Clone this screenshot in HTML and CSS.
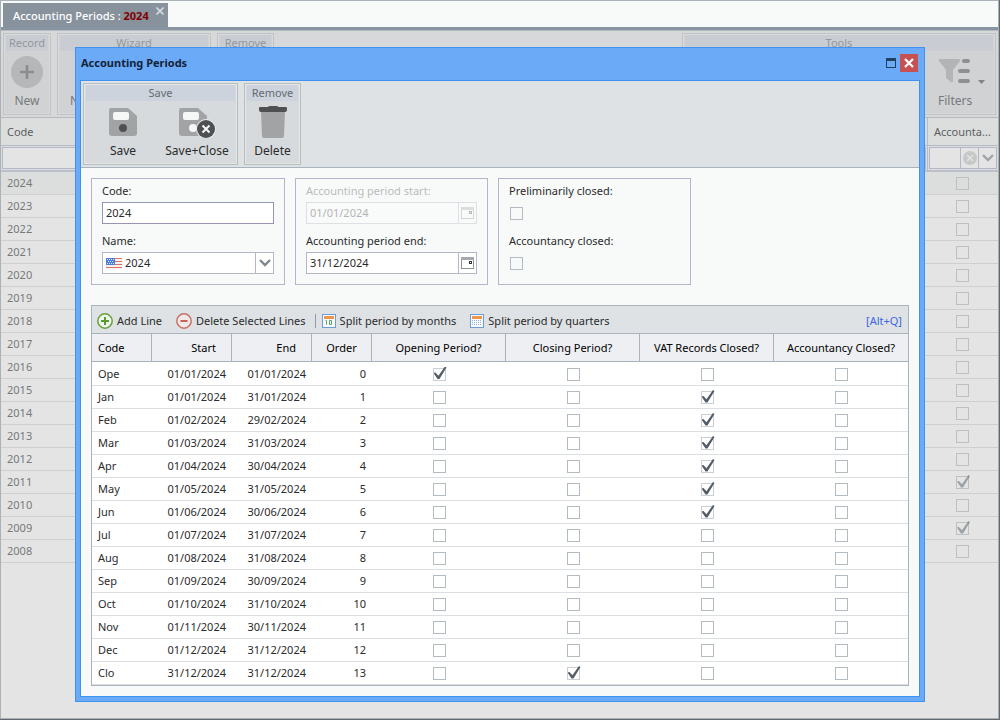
FILE: index.html
```
<!DOCTYPE html>
<html lang="en">
<head>
<meta charset="utf-8">
<title>Accounting Periods</title>
<link rel="stylesheet" href="styles.css">
</head>
<body>
<div class="app">
  <nav class="tabs">
    <div class="tab"><span>Accounting Periods : <b>2024</b></span><button class="tab-close" aria-label="Close tab"><svg width="8" height="8" viewBox="0 0 8 8"><path d="M0.5 0.5L7.5 7.5M7.5 0.5L0.5 7.5" stroke="#d5dadf" stroke-width="1.6"/></svg></button></div>
  </nav>
  <div class="ribbon ribbon-back">
    <section class="group group-record"><h2>Record</h2><div class="tools"><button class="tool"><svg width="32" height="32" viewBox="0 0 32 32"><circle cx="16" cy="16" r="16" fill="#b5b7b8"/><path d="M16 9v14M9 16h14" stroke="#8a8c8d" stroke-width="2.6"/></svg><span>New</span></button></div></section>
    <section class="group group-wizard"><h2>Wizard</h2><div class="tools"><button class="tool"><span>New Period</span></button></div></section>
    <section class="group group-remove"><h2>Remove</h2></section>
    <section class="group group-tools"><h2>Tools</h2><div class="tools tools-end"><button class="tool tool-filter"><svg width="48" height="32" viewBox="0 0 48 32"><path d="M1 5Q0 3 2 3H21Q23 3 22 5L15 14V25Q15 27 13 26L8 22V14Z" fill="#b2b4b5"/><path d="M26 5H30M22 15H30M22 25H30" stroke="#8e9091" stroke-width="4" stroke-linecap="round"/><path d="M40 24h7l-3.500 4z" fill="#7f8385"/></svg><span>Filters</span></button></div></section>
  </div>
  <table class="periods">
    <colgroup><col><col class="col-acc"></colgroup>
    <thead>
      <tr><th>Code</th><th>Accounta...</th></tr>
      <tr class="filter"><td><input type="text" aria-label="Filter code"></td><td><div class="filter-box"><input type="text" aria-label="Filter accountancy"><button aria-label="Clear"><svg width="14" height="14" viewBox="0 0 14 14"><circle cx="7" cy="7" r="7" fill="#c6c7c8"/><path d="M4 4l6 6M10 4l-6 6" stroke="#e4e4e4" stroke-width="1.4"/></svg></button><button aria-label="Open list"><svg width="12" height="8" viewBox="0 0 12 8"><path d="M1 1L6 6L11 1" fill="none" stroke="#a0a4a8" stroke-width="2.400"/></svg></button></div></td></tr>
    </thead>
    <tbody>
      <tr class="selected"><td>2024</td><td><input type="checkbox" aria-label="2024 closed"></td></tr>
      <tr><td>2023</td><td><input type="checkbox" aria-label="2023 closed"></td></tr>
      <tr><td>2022</td><td><input type="checkbox" aria-label="2022 closed"></td></tr>
      <tr><td>2021</td><td><input type="checkbox" aria-label="2021 closed"></td></tr>
      <tr><td>2020</td><td><input type="checkbox" aria-label="2020 closed"></td></tr>
      <tr><td>2019</td><td><input type="checkbox" aria-label="2019 closed"></td></tr>
      <tr><td>2018</td><td><input type="checkbox" aria-label="2018 closed"></td></tr>
      <tr><td>2017</td><td><input type="checkbox" aria-label="2017 closed"></td></tr>
      <tr><td>2016</td><td><input type="checkbox" aria-label="2016 closed"></td></tr>
      <tr><td>2015</td><td><input type="checkbox" aria-label="2015 closed"></td></tr>
      <tr><td>2014</td><td><input type="checkbox" aria-label="2014 closed"></td></tr>
      <tr><td>2013</td><td><input type="checkbox" aria-label="2013 closed"></td></tr>
      <tr><td>2012</td><td><input type="checkbox" aria-label="2012 closed"></td></tr>
      <tr><td>2011</td><td><input type="checkbox" aria-label="2011 closed" checked></td></tr>
      <tr><td>2010</td><td><input type="checkbox" aria-label="2010 closed"></td></tr>
      <tr><td>2009</td><td><input type="checkbox" aria-label="2009 closed" checked></td></tr>
      <tr><td>2008</td><td><input type="checkbox" aria-label="2008 closed"></td></tr>
    </tbody>
  </table>
</div>

<div class="dialog" role="dialog" aria-labelledby="dlg-title">
  <header class="titlebar">
    <h1 id="dlg-title">Accounting Periods</h1>
    <button class="max" aria-label="Maximize"></button>
    <button class="close" aria-label="Close"><svg width="10" height="10" viewBox="0 0 10 10"><path d="M1 1l8 8M9 1L1 9" stroke="#fff" stroke-width="2.200"/></svg></button>
  </header>
  <div class="content">
    <div class="ribbon">
      <section class="group group-save"><h2>Save</h2><div class="tools">
        <button class="tool"><svg width="32" height="32" viewBox="0 0 32 32"><path d="M4 2H21L30 10V27Q30 30 27 30H5Q2 30 2 27V5Q2 2 4 2Z" fill="#a2a3a5"/><rect x="6" y="6" width="16" height="8" rx="2" fill="#f5f7f7"/><circle cx="16" cy="22" r="4" fill="#4f5051"/></svg><span>Save</span></button>
        <button class="tool"><svg width="42" height="32" viewBox="0 0 42 32"><path d="M5 2H22L31 10V27Q31 30 28 30H6Q3 30 3 27V5Q3 2 5 2Z" fill="#a2a3a5"/><rect x="7" y="6" width="16" height="8" rx="2" fill="#f5f7f7"/><circle cx="17" cy="22" r="4" fill="#f5f7f7"/><circle cx="30" cy="23" r="10" fill="#e6eaec"/><circle cx="30" cy="23" r="9" fill="#4f5051"/><path d="M26.500 19.500l7 7M33.500 19.500l-7 7" stroke="#f5f7f7" stroke-width="2"/></svg><span>Save+Close</span></button>
      </div></section>
      <section class="group group-remove"><h2>Remove</h2><div class="tools"><button class="tool"><svg width="32" height="32" viewBox="0 0 32 32"><path d="M4 5H28L27 30Q27 32 25 32H7Q5 32 5 30Z" fill="#a2a3a5"/><path d="M3 1H11Q11 0 13 0H20Q21 0 21 1H29Q30 1 30 2V4Q30 6 28 6H4Q2 6 2 4V2Q2 1 3 1Z" fill="#4f5051"/></svg><span>Delete</span></button></div></section>
    </div>

    <form class="form">
      <fieldset>
        <label for="code">Code:</label>
        <div class="field field-focus"><input id="code" type="text" value="2024"></div>
        <label for="name">Name:</label>
        <div class="field"><svg class="flag" width="16" height="11" viewBox="0 0 16 11"><rect width="16" height="11" fill="#f4f2f2"/><path d="M0 .5H16M0 3.500H16M0 6.500H16M0 9.500H16" stroke="#e0705f" stroke-width="1.200"/><rect width="9" height="7" fill="#4a7fd6"/><path d="M1 1.500H8M2 3.500H8M1 5.500H8" stroke="#dbe6f8" stroke-dasharray="1 1"/></svg><input id="name" type="text" value="2024"><button type="button" aria-label="Open list"><svg width="12" height="8" viewBox="0 0 12 8"><path d="M1 1L6 6L11 1" fill="none" stroke="#7c8791" stroke-width="2.400"/></svg></button></div>
      </fieldset>
      <fieldset>
        <label class="dim" for="start">Accounting period start:</label>
        <div class="field field-off"><input id="start" type="text" value="01/01/2024" disabled><button type="button" aria-label="Pick start date" disabled><svg width="13" height="12" viewBox="0 0 13 12"><rect x=".5" y=".5" width="12" height="11" fill="none" stroke="#8d9297"/><rect width="13" height="3" fill="#a5a9ad"/><rect x="8.500" y="4.500" width="2" height="2" fill="#fff" stroke="#33373b"/></svg></button></div>
        <label for="end">Accounting period end:</label>
        <div class="field"><input id="end" type="text" value="31/12/2024"><button type="button" aria-label="Pick end date"><svg width="13" height="12" viewBox="0 0 13 12"><rect x=".5" y=".5" width="12" height="11" fill="none" stroke="#8d9297"/><rect width="13" height="3" fill="#a5a9ad"/><rect x="8.500" y="4.500" width="2" height="2" fill="#fff" stroke="#33373b"/></svg></button></div>
      </fieldset>
      <fieldset>
        <label for="prelim">Preliminarily closed:</label>
        <div class="check-row"><input id="prelim" type="checkbox"></div>
        <label for="acc">Accountancy closed:</label>
        <div class="check-row"><input id="acc" type="checkbox"></div>
      </fieldset>
    </form>

    <section class="lines">
      <div class="linebar">
        <button><svg width="16" height="16" viewBox="0 0 16 16"><circle cx="8" cy="8" r="7.200" fill="#f0f4ee" stroke="#66a03a" stroke-width="1.500"/><path d="M8 4v8M4 8h8" stroke="#5c9a2f" stroke-width="2"/></svg>Add Line</button>
        <button class="remove-line"><svg width="16" height="16" viewBox="0 0 16 16"><circle cx="8" cy="8" r="7.200" fill="#efe9e9" stroke="#cb6f66" stroke-width="1.500"/><path d="M4.500 8h7" stroke="#c96158" stroke-width="2"/></svg>Delete Selected Lines</button>
        <i class="sep"></i>
        <button><svg width="14" height="14" viewBox="0 0 14 14"><rect x=".5" y=".5" width="13" height="13" fill="#f8fbff" stroke="#6e9cd8"/><rect x="2" y="2" width="10" height="3" fill="#f2944a"/><path d="M4.500 6.500v4M3.500 6.500h1M7.500 6.500h2v4h-2z" fill="none" stroke="#5aa567"/></svg>Split period by months</button>
        <button class="quarters"><svg width="14" height="14" viewBox="0 0 14 14"><rect x=".5" y=".5" width="13" height="13" fill="#f8fbff" stroke="#6e9cd8"/><rect x="2" y="2" width="10" height="3" fill="#f2944a"/><path d="M2 6.500h10M2 8.500h10M2 10.500h10" stroke="#96b2dd" stroke-dasharray="1 1"/></svg>Split period by quarters</button>
        <a href="#lines">[Alt+Q]</a>
      </div>
      <table id="lines">
        <colgroup><col class="c60"><col class="c80"><col class="c80"><col class="c60"><col><col><col><col></colgroup>
        <thead><tr><th>Code</th><th class="num">Start</th><th class="num">End</th><th class="mid">Order</th><th class="mid">Opening Period?</th><th class="mid">Closing Period?</th><th class="mid">VAT Records Closed?</th><th class="mid">Accountancy Closed?</th></tr></thead>
        <tbody>
          <tr><td>Ope</td><td>01/01/2024</td><td>01/01/2024</td><td>0</td><td><input type="checkbox" aria-label="Opening" checked></td><td><input type="checkbox" aria-label="Closing"></td><td><input type="checkbox" aria-label="VAT"></td><td><input type="checkbox" aria-label="Accountancy"></td></tr>
          <tr><td>Jan</td><td>01/01/2024</td><td>31/01/2024</td><td>1</td><td><input type="checkbox" aria-label="Opening"></td><td><input type="checkbox" aria-label="Closing"></td><td><input type="checkbox" aria-label="VAT" checked></td><td><input type="checkbox" aria-label="Accountancy"></td></tr>
          <tr><td>Feb</td><td>01/02/2024</td><td>29/02/2024</td><td>2</td><td><input type="checkbox" aria-label="Opening"></td><td><input type="checkbox" aria-label="Closing"></td><td><input type="checkbox" aria-label="VAT" checked></td><td><input type="checkbox" aria-label="Accountancy"></td></tr>
          <tr><td>Mar</td><td>01/03/2024</td><td>31/03/2024</td><td>3</td><td><input type="checkbox" aria-label="Opening"></td><td><input type="checkbox" aria-label="Closing"></td><td><input type="checkbox" aria-label="VAT" checked></td><td><input type="checkbox" aria-label="Accountancy"></td></tr>
          <tr><td>Apr</td><td>01/04/2024</td><td>30/04/2024</td><td>4</td><td><input type="checkbox" aria-label="Opening"></td><td><input type="checkbox" aria-label="Closing"></td><td><input type="checkbox" aria-label="VAT" checked></td><td><input type="checkbox" aria-label="Accountancy"></td></tr>
          <tr><td>May</td><td>01/05/2024</td><td>31/05/2024</td><td>5</td><td><input type="checkbox" aria-label="Opening"></td><td><input type="checkbox" aria-label="Closing"></td><td><input type="checkbox" aria-label="VAT" checked></td><td><input type="checkbox" aria-label="Accountancy"></td></tr>
          <tr><td>Jun</td><td>01/06/2024</td><td>30/06/2024</td><td>6</td><td><input type="checkbox" aria-label="Opening"></td><td><input type="checkbox" aria-label="Closing"></td><td><input type="checkbox" aria-label="VAT" checked></td><td><input type="checkbox" aria-label="Accountancy"></td></tr>
          <tr><td>Jul</td><td>01/07/2024</td><td>31/07/2024</td><td>7</td><td><input type="checkbox" aria-label="Opening"></td><td><input type="checkbox" aria-label="Closing"></td><td><input type="checkbox" aria-label="VAT"></td><td><input type="checkbox" aria-label="Accountancy"></td></tr>
          <tr><td>Aug</td><td>01/08/2024</td><td>31/08/2024</td><td>8</td><td><input type="checkbox" aria-label="Opening"></td><td><input type="checkbox" aria-label="Closing"></td><td><input type="checkbox" aria-label="VAT"></td><td><input type="checkbox" aria-label="Accountancy"></td></tr>
          <tr><td>Sep</td><td>01/09/2024</td><td>30/09/2024</td><td>9</td><td><input type="checkbox" aria-label="Opening"></td><td><input type="checkbox" aria-label="Closing"></td><td><input type="checkbox" aria-label="VAT"></td><td><input type="checkbox" aria-label="Accountancy"></td></tr>
          <tr><td>Oct</td><td>01/10/2024</td><td>31/10/2024</td><td>10</td><td><input type="checkbox" aria-label="Opening"></td><td><input type="checkbox" aria-label="Closing"></td><td><input type="checkbox" aria-label="VAT"></td><td><input type="checkbox" aria-label="Accountancy"></td></tr>
          <tr><td>Nov</td><td>01/11/2024</td><td>30/11/2024</td><td>11</td><td><input type="checkbox" aria-label="Opening"></td><td><input type="checkbox" aria-label="Closing"></td><td><input type="checkbox" aria-label="VAT"></td><td><input type="checkbox" aria-label="Accountancy"></td></tr>
          <tr><td>Dec</td><td>01/12/2024</td><td>31/12/2024</td><td>12</td><td><input type="checkbox" aria-label="Opening"></td><td><input type="checkbox" aria-label="Closing"></td><td><input type="checkbox" aria-label="VAT"></td><td><input type="checkbox" aria-label="Accountancy"></td></tr>
          <tr><td>Clo</td><td>31/12/2024</td><td>31/12/2024</td><td>13</td><td><input type="checkbox" aria-label="Opening"></td><td><input type="checkbox" aria-label="Closing" checked></td><td><input type="checkbox" aria-label="VAT"></td><td><input type="checkbox" aria-label="Accountancy"></td></tr>
        </tbody>
      </table>
    </section>
  </div>
</div>
</body>
</html>
```
FILE: styles.css
```
* { box-sizing: border-box; }
body { margin: 0; height: 100vh; padding: 0 1px 1px 0; background: #62676c; font: 11px/16px "Noto Sans", "Open Sans", sans-serif; color: #2b2b2b; overflow: hidden; }
button, input { font: inherit; color: inherit; padding: 0; margin: 0; border: 0; background: none; border-radius: 0; }
h1, h2 { margin: 0; font-size: inherit; font-weight: 400; }
svg { display: block; flex: none; }

.app { height: 100%; border: 1px solid #a9b1b9; background: #e4e4e4; overflow: hidden; }

.tabs { display: flex; height: 29px; padding: 2px 2px 0; background: #f8faf9; border-bottom: 3px solid #8894a1; }
.tab { display: flex; justify-content: space-between; align-items: flex-start; min-width: 165px; padding: 0 4px 0 10px; background: #87929d; color: #fff; line-height: 26px; font-weight: 500; }
.tab b { color: #800000; }
.tab-close { padding-top: 4px; }

.ribbon { display: flex; gap: 6px; height: 87px; padding: 2px; background: #dee2e5; border-bottom: 1px solid #a9b3bb; }
.group { display: flex; flex-direction: column; border: 1px solid #babdbf; box-shadow: inset 0 0 0 1px #e4e7e8; padding: 1px 2px; height: 82px; background: #d6dadd; }
.group h2 { background: #ccd3dc; color: #666b70; line-height: 16px; text-align: center; }
.group-save { width: 155px; }
.group-remove { width: 57px; }
.tools { display: flex; flex: 1; }
.tool { display: flex; flex-direction: column; align-items: center; justify-content: flex-end; gap: 4px; flex: 1 1 auto; padding-bottom: 3px; font-size: 12px; line-height: 18px; white-space: nowrap; }
.group-save .tool { flex: 0 0 74px; }

.ribbon-back { background: #d6d8d9; border-color: #b5babd; border-top: 1px solid #b3bac0; height: 88px; }
.ribbon-back .group { background: #d0d2d4; border-color: #c0c2c3; box-shadow: inset 0 0 0 1px #d8dadb; color: #77797b; }
.ribbon-back h2 { background: #c9ccd3; color: #94979b; }
.group-record { width: 48px; }
.group-wizard { width: 154px; overflow: hidden; }
.group-wizard .tool { align-items: flex-start; padding-left: 10px; }
.group-tools { flex: 1; max-width: 314px; margin-left: auto; }
.tools-end { justify-content: flex-end; }
.tool-filter { flex: none; padding-right: 7px; }
.tool-filter span { align-self: flex-start; }

table { border-collapse: separate; border-spacing: 0; table-layout: fixed; width: 100%; }
th, td { padding: 0 6px; text-align: left; font-weight: 400; }
.periods { color: #76797b; }
.periods th { height: 28px; background: #dcdedd; border-bottom: 1px solid #b7bbc3; color: #5d6062; }
.periods th + th { border-left: 1px solid #b7bbc3; }
.col-acc { width: 71px; }
.filter td { height: 26px; padding: 1px; background: #dcdedd; border-bottom: 2px solid #bdc0ca; }
.filter td + td { border-left: 1px solid #b7bbc3; }
.filter td > input, .filter-box { display: flex; width: 100%; height: 22px; border: 1px solid #b4b7c6; background: #e4e4e4; }
.filter-box input { flex: 1; min-width: 0; }
.filter-box button { display: grid; place-items: center; width: 18px; border-left: 1px solid #b4b7c6; }
.periods tbody td { height: 23px; border-bottom: 1px solid #cfcfcf; }
.selected td { background: #dcdedd; }

input[type="checkbox"] { appearance: none; position: relative; display: block; width: 13px; height: 13px; border: 1px solid #b3bbc3; background: #fff; }
td input[type="checkbox"] { margin: 1px auto 0; }
input[type="checkbox"]:checked { border-color: #c9cfd4; }
input[type="checkbox"]:checked::after { content: ""; position: absolute; left: 0; top: -2px; width: 13px; height: 13px; background: #545d66; clip-path: polygon(0 50%, 15% 47%, 38% 72%, 88% 0, 100% 8%, 46% 96%, 31% 96%); }
.periods input[type="checkbox"] { border-color: #bdbfc0; background: #e4e4e4; }
.periods input[type="checkbox"]::after { opacity: 0.5; }
.periods .selected input[type="checkbox"] { background: #dcdedd; }

.dialog { position: absolute; top: 47px; left: 75px; right: 75px; border: 1px solid #3d92f2; background: #6baaf6; padding: 0 4px 4px; }
.titlebar { display: flex; align-items: center; height: 32px; padding: 0 2px 2px 1px; }
.titlebar h1 { flex: 1; font-weight: 700; color: #13233a; }
.max { width: 10px; height: 10px; border: 1px solid #20415f; border-top-width: 3px; margin-right: 4px; }
.close { display: grid; place-items: center; width: 18px; height: 18px; background: #c75050; }
.content { border: 1px solid #3d92f2; background: #f8faf9; }

.form { display: flex; gap: 10px; padding: 10px 10px 20px; }
fieldset { width: 193px; min-width: 0; margin: 0; padding: 3px 10px 10px; border: 1px solid #b3b5cb; }
fieldset:first-child { width: 194px; }
label { display: block; line-height: 18px; }
.dim { color: #b9bcbd; }
.field { display: flex; align-items: center; height: 22px; margin: 2px 0 8px; border: 1px solid #b4b7c9; background: #fff; }
.field:last-child { margin-bottom: 0; }
.field input { flex: 1; min-width: 0; padding: 0 3px; line-height: 20px; }
.field button { display: grid; place-items: center; width: 18px; height: 20px; border-left: 1px solid #b4b7c9; }
.field-focus { border-color: #9496b4; }
.field-off { border-color: #dfe0e6; background: #f9fbfa; color: #b2b5b6; }
.field-off button { border-color: #dfe0e6; }
.field-off svg { opacity: 0.35; }
.flag { margin-left: 3px; }
.check-row { display: flex; align-items: center; height: 22px; margin: 2px 0 8px; padding: 0 1px; }
.check-row input[type="checkbox"] { background: #f8faf9; }
.check-row:last-child { margin-bottom: 0; }

.lines { margin: 0 10px 10px; border: 1px solid #a9b3bb; background: #fff; }
.linebar { display: flex; align-items: center; height: 28px; padding: 2px 6px 0 5px; background: #dee2e5; border-bottom: 1px solid #a9b3bb; }
.linebar button { display: flex; align-items: center; gap: 4px; white-space: nowrap; }
.linebar .remove-line, .linebar .quarters { margin-left: 14px; }
.sep { width: 1px; height: 14px; margin: 0 6px 0 9px; background: #8f9bab; }
.linebar a { margin-left: auto; color: #3f66e0; text-decoration: none; }
.c60 { width: 60px; }
.c80 { width: 80px; }
.lines th { height: 28px; background: #eeeff2; border-right: 1px solid #a9b3bb; border-bottom: 1px solid #a9b3bb; color: #000; white-space: nowrap; }
.lines th:last-child { border-right: 0; }
.lines .num { text-align: right; padding-right: 15px; }
.lines .mid { text-align: center; padding: 0; }
.lines td { height: 23px; border-bottom: 1px solid #dbdee2; }
.lines tbody tr:first-child td { height: 24px; }
.lines td:nth-child(2), .lines td:nth-child(3), .lines td:nth-child(4) { text-align: right; }
```
